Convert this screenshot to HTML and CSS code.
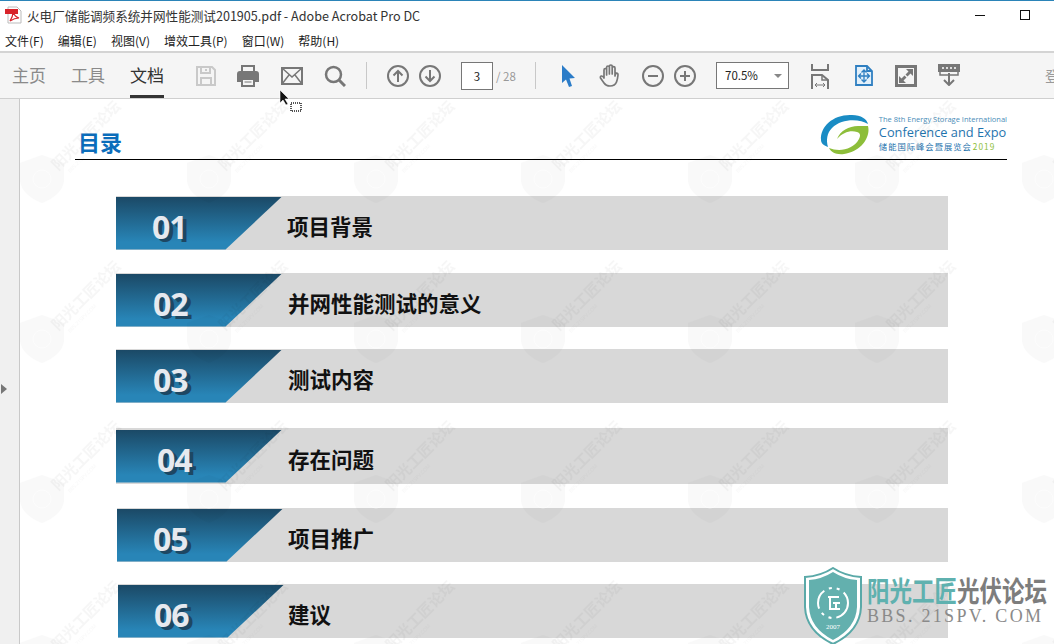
FILE: index.html
```html
<!DOCTYPE html>
<html lang="zh-CN">
<head>
  <meta charset="UTF-8" />
  <title>火电厂储能调频系统并网性能测试201905.pdf - Adobe Acrobat Pro DC</title>
  <link rel="stylesheet" href="styles.css">
</head>
<body>
  <div class="window">

    <div class="titlebar">
      <svg class="pdf-icon" width="18" height="18" viewBox="0 0 18 18">
        <path d="M3 1h9l4 4v12H3z" fill="#fff" stroke="#bbb"/>
        <path d="M0 3h13v5H0z" fill="#d8232a"/>
        <path d="M5 15c2-3 3-6 3-9 1 3 3 5 6 6-3 0-6 1-9 3z" fill="none" stroke="#d8232a" stroke-width="1.2"/>
      </svg>
      <span class="title-text">火电厂储能调频系统并网性能测试201905.pdf - Adobe Acrobat Pro DC</span>
      <span class="win-min"></span>
      <span class="win-max"></span>
    </div>

    <div class="menubar">
      <span>文件(F)</span>
      <span>编辑(E)</span>
      <span>视图(V)</span>
      <span>增效工具(P)</span>
      <span>窗口(W)</span>
      <span>帮助(H)</span>
    </div>

    <div class="toolbar">
      <span class="tab">主页</span>
      <span class="tab">工具</span>
      <span class="tab active">文档</span>

      <svg class="tool save" width="22" height="22" viewBox="0 0 22 22" fill="none" stroke="#c9c9c9" stroke-width="2">
        <path d="M2 2h15l3 3v15H2z"/><path d="M6 2v6h9V2M6 20v-7h10v7"/><path d="M11 4v2"/>
      </svg>
      <svg class="tool print" width="22" height="22" viewBox="0 0 22 22">
        <path d="M5 1h12v6H5z" fill="none" stroke="#777" stroke-width="2"/>
        <path d="M3 6h16q3 0 3 3v8h-4v-4H4v4H0V9q0-3 3-3z" fill="#777"/>
        <path d="M5 14h12v7H5z" fill="none" stroke="#777" stroke-width="2"/>
        <path d="M7.500 17h7" stroke="#777"/>
      </svg>
      <svg class="tool mail" width="22" height="18" viewBox="0 0 22 18" fill="none" stroke="#777" stroke-width="2">
        <path d="M1 1h20v16H1z"/><path d="M1 1l10 9 10-9M1 17l7-9M21 17l-7-9" stroke-width="1.500"/>
      </svg>
      <svg class="tool search" width="22" height="22" viewBox="0 0 22 22" fill="none" stroke="#777" stroke-width="2.500">
        <circle cx="9.500" cy="9.500" r="7.500"/><path d="M15 15l6 6" stroke-width="3"/>
      </svg>

      <span class="divider div-a"></span>

      <svg class="tool up" width="22" height="22" viewBox="0 0 22 22" fill="none" stroke="#777" stroke-width="2">
        <circle cx="11" cy="11" r="10"/><path d="M11 17V6M6.500 10.500L11 6l4.500 4.500"/>
      </svg>
      <svg class="tool down" width="22" height="22" viewBox="0 0 22 22" fill="none" stroke="#777" stroke-width="2">
        <circle cx="11" cy="11" r="10"/><path d="M11 5v11M6.500 11.500L11 16l4.500-4.500"/>
      </svg>

      <span class="page-box">3</span>
      <span class="page-total">/ 28</span>

      <span class="divider div-b"></span>

      <svg class="tool arrow" width="15" height="22" viewBox="0 0 15 22">
        <path d="M1 0l13 13-5.500.5L11 21l-3 1-3-7.500L1 18z" fill="#2b7cc8"/>
      </svg>
      <svg class="tool hand" width="22" height="24" viewBox="0 0 22 24" fill="none" stroke="#777" stroke-width="1.700" stroke-linecap="round" stroke-linejoin="round">
        <path d="M5 14V6q0-1.500 1.300-1.500T7.600 6v5M7.600 10V3.500q0-1.500 1.400-1.500t1.400 1.500V10M10.400 10V2.500Q10.400 1 11.800 1t1.400 1.500V10M13.200 10V4q0-1.400 1.400-1.400T16 4v8q0-2 1.600-3 1.400 0 1.400 2-.5 5-1.500 7-1.500 4-6.500 4-4 0-6-3l-3.500-5q-.5-1.800 1-2 1.500-.2 2.500 2"/>
      </svg>
      <svg class="tool minus" width="22" height="22" viewBox="0 0 22 22" fill="none" stroke="#777" stroke-width="2">
        <circle cx="11" cy="11" r="10"/><path d="M6 11h10"/>
      </svg>
      <svg class="tool plus" width="22" height="22" viewBox="0 0 22 22" fill="none" stroke="#777" stroke-width="2">
        <circle cx="11" cy="11" r="10"/><path d="M6 11h10M11 6v10"/>
      </svg>

      <span class="zoom-box">70.5%<i class="caret"></i></span>

      <svg class="tool fit" width="18" height="25" viewBox="0 0 18 25" fill="none" stroke="#777" stroke-width="2">
        <path d="M1 0v6h16V0"/><path d="M1 25V11h10l6 5v9"/><path d="M11 11v5h6" stroke-width="1.500"/><path d="M4 21h10M4 21l2-2M4 21l2 2M14 21l-2-2M14 21l-2 2" stroke-width="1"/>
      </svg>
      <svg class="tool scroll" width="18" height="21" viewBox="0 0 18 21" stroke="#2f7fc1" stroke-width="1.800">
        <path d="M1 1h11l5 5v14H1z" fill="#e3f0fa"/><path d="M12 1v5h5" fill="none"/><path d="M9 5v12M4 11h10M6.500 7.500L9 5l2.500 2.500M6.500 14.500L9 17l2.500-2.500M6 8.500L3.500 11 6 13.500M12 8.500l2.500 2.500-2.500 2.500" fill="none" stroke-width="1.300"/>
      </svg>
      <svg class="tool full" width="22" height="22" viewBox="0 0 22 22">
        <path d="M1.500 1.500h19v19h-19z" fill="none" stroke="#777" stroke-width="3"/>
        <path d="M11 4h7v7l-2.500-2.500-3 3-2-2 3-3zM11 18H4v-7l2.500 2.500 3-3 2 2-3 3z" fill="#777"/>
      </svg>
      <svg class="tool stamp" width="22" height="22" viewBox="0 0 22 22" fill="none">
        <path d="M0 0h22v8H0z" fill="#777"/>
        <path d="M4 4h2M8 4h2M12 4h2M16 4h2" stroke="#fff" stroke-width="1.500"/>
        <path d="M2 8v3h18V8" stroke="#777" stroke-width="1.500"/>
        <path d="M11 9v12M6 16l5 5 5-5" stroke="#777" stroke-width="2"/>
      </svg>

      <span class="signin">登录</span>
    </div>

    <div class="viewer">
      <div class="rail"><i class="rail-arrow"></i></div>

      <div class="page">
        <div class="page-head">
          <h1>目录</h1>
          <div class="conf-logo">
            <svg width="50" height="42" viewBox="0 0 50 42">
              <path d="M1 26C0 12 14 0 32 1c9 0 15 4 16 9C40 5 22 4 12 14 7 19 6 26 8 33 3 31 1 29 1 26z" fill="#1a8cc4"/>
              <path d="M48 12c3 12-8 26-24 28-8 1-13-2-15-6 10 4 24 2 30-9 2-4 1-6-2-7-6-2-14 0-20 7 3-8 12-13 21-13 5 0 9 0 10 0z" fill="#8dbe3a"/>
            </svg>
            <div class="conf-text">
              <div class="conf-small">The 8th Energy Storage International</div>
              <div class="conf-big">Conference and Expo</div>
              <div class="conf-cn">储能国际峰会暨展览会<b>2019</b></div>
            </div>
          </div>
        </div>

        <div class="row row-1"><div class="ribbon"><span class="num">01</span></div><span class="label">项目背景</span></div>
        <div class="row row-2"><div class="ribbon"><span class="num">02</span></div><span class="label">并网性能测试的意义</span></div>
        <div class="row row-3"><div class="ribbon"><span class="num">03</span></div><span class="label">测试内容</span></div>
        <div class="row row-4"><div class="ribbon"><span class="num">04</span></div><span class="label">存在问题</span></div>
        <div class="row row-5"><div class="ribbon"><span class="num">05</span></div><span class="label">项目推广</span></div>
        <div class="row row-6"><div class="ribbon"><span class="num">06</span></div><span class="label">建议</span></div>

        <svg class="watermarks" width="1034" height="545">
          <defs>
            <pattern id="wm" width="167" height="160" patternUnits="userSpaceOnUse">
              <path d="M22 56l22 8v18q-2 14-22 22Q2 96 0 82V64z" fill="#000" fill-opacity=".025"/>
              <circle cx="22" cy="80" r="9" fill="none" stroke="#fff" stroke-opacity=".5"/>
              <text transform="translate(38 72) rotate(-45)" class="wm-text">阳光工匠论坛</text>
              <text transform="translate(50 74) rotate(-45)" class="wm-small">BBS.21SPV.COM</text>
            </pattern>
          </defs>
          <rect width="1034" height="545" fill="url(#wm)"/>
        </svg>

        <div class="site-mark">
          <svg class="site-shield" width="58" height="78" viewBox="0 0 58 78">
            <path d="M29 1q12 8 28 9v30q-1 24-28 37Q2 64 1 40V10q16-1 28-9z" fill="#fff" stroke="#5aa9a8" stroke-width="2"/>
            <path d="M29 5q11 7 24 8v27q-1 21-24 33Q6 61 5 40V13q13-1 24-8z" fill="#63b0ae"/>
            <circle cx="29" cy="36" r="15" fill="none" stroke="#fff" stroke-width="2" stroke-dasharray="20 5 3 5 3 5"/>
            <path d="M24 30h11M26 30v12h10M29 36h7M32 36v6" fill="none" stroke="#fff" stroke-width="2"/>
            <text x="29" y="62" class="shield-year">2007</text>
          </svg>
          <div class="site-text">
            <div class="site-name"><span class="teal">阳光工匠</span><span class="grey">光伏论坛</span></div>
            <div class="site-url">BBS. 21SPV. COM</div>
          </div>
        </div>
      </div>
    </div>

    <svg class="cursor" width="24" height="24" viewBox="0 0 24 24">
      <path d="M1 0v13l3-3 3 5 2-1-3-5h4z" fill="#111" stroke="#fff" stroke-width=".6"/>
      <rect x="12" y="13" width="10" height="8" fill="#fff" stroke="#555" stroke-width="2" stroke-dasharray="1 1"/>
    </svg>
  </div>
</body>
</html>
```

FILE: styles.css
```css
* {
  box-sizing: border-box;
}

html, body {
  margin: 0;
  height: 100%;
  overflow: hidden;
}

body {
  font-family: "Noto Sans CJK SC", "Noto Sans", sans-serif;
  color: #222;
  background: #fff;
}

.window {
  position: relative;
  height: 644px;
  display: flex;
  flex-direction: column;
  border-top: 1px solid #2b84b8;
}

/* title + menu */
.titlebar {
  height: 28px;
  display: flex;
  align-items: center;
  padding-left: 5px;
  background: #fff;
}

.pdf-icon {
  flex: none;
}

.title-text {
  margin-left: 4px;
  font-size: 12.6px;
  color: #333;
  white-space: nowrap;
}

.win-min {
  margin-left: auto;
  width: 10px;
  height: 1px;
  background: #111;
  margin-right: 35px;
}

.win-max {
  width: 10px;
  height: 10px;
  border: 1px solid #111;
  margin-right: 24px;
}

.menubar {
  height: 22px;
  display: flex;
  align-items: center;
  padding-left: 5px;
  gap: 14px;
  font-size: 12px;
  color: #222;
  background: #fff;
}

/* toolbar */
.toolbar {
  height: 48px;
  flex: none;
  display: flex;
  align-items: center;
  padding-left: 12px;
  background: #f5f5f5;
  border-top: 2px solid #d4d4d4;
  border-bottom: 1px solid #cfcfcf;
  overflow: hidden;
}

.tab {
  flex: none;
  align-self: stretch;
  display: flex;
  align-items: center;
  margin-right: 25px;
  font-size: 17px;
  color: #8a8a8a;
  white-space: nowrap;
  border-bottom: 3px solid transparent;
}

.tab.active {
  color: #333;
  border-bottom-color: #333;
}

.tool {
  flex: none;
}

.save { margin-left: 6px; }
.print { margin-left: 20px; }
.mail { margin-left: 22px; }
.search { margin-left: 21px; }
.up { margin-left: 20px; }
.down { margin-left: 10px; }
.arrow { margin-left: 25px; }
.hand { margin-left: 23px; }
.minus { margin-left: 21px; }
.plus { margin-left: 10px; }
.fit { margin-left: 22px; margin-top: 2px; }
.scroll { margin-left: 26px; }
.full { margin-left: 22px; }
.stamp { margin-left: 21px; margin-top: -2px; }

.divider {
  flex: none;
  width: 1px;
  height: 27px;
  background: #c8c8c8;
}

.div-a { margin-left: 20px; }
.div-b { margin-left: 15px; }

.page-box {
  flex: none;
  width: 32px;
  height: 28px;
  margin-left: 20px;
  border: 1px solid #777;
  background: #fff;
  font-size: 11.5px;
  text-align: center;
  line-height: 26px;
  color: #222;
}

.page-total {
  flex: none;
  width: 24px;
  margin-left: 3px;
  font-size: 11.5px;
  color: #999;
  white-space: nowrap;
}

.zoom-box {
  flex: none;
  position: relative;
  width: 73px;
  height: 27px;
  margin-left: 20px;
  padding-left: 8px;
  border: 1px solid #777;
  background: #fff;
  font-size: 11.5px;
  line-height: 25px;
  color: #222;
}

.caret {
  position: absolute;
  right: 3px;
  top: 11px;
  width: 0;
  height: 0;
  margin-right: 3px;
  border-left: 4px solid transparent;
  border-right: 4px solid transparent;
  border-top: 4px solid #888;
}

.signin {
  flex: none;
  margin-left: 85px;
  font-size: 15px;
  color: #999;
  white-space: nowrap;
}

/* document area */
.viewer {
  flex: 1;
  display: flex;
  min-height: 0;
}

.rail {
  position: relative;
  width: 20px;
  flex: none;
  display: flex;
  align-items: center;
  background: #f0f0f0;
  border-right: 1px solid #c9c9c9;
}

.rail-arrow {
  width: 0;
  height: 0;
  margin: 35px 0 0 1px;
  border-top: 5px solid transparent;
  border-bottom: 5px solid transparent;
  border-left: 6px solid #777;
}

.page {
  position: relative;
  flex: 1;
  overflow: hidden;
  background: #fff;
}

.page-head {
  width: 932px;
  height: 61px;
  margin-left: 55px;
  display: flex;
  align-items: flex-end;
  justify-content: space-between;
  border-bottom: 1px solid #000;
}

.page-head h1 {
  margin: 0 0 0 3px;
  padding-bottom: 3px;
  font-size: 22px;
  line-height: 30px;
  font-weight: 700;
  color: #0b6dbb;
}

.conf-logo {
  display: flex;
  align-items: flex-end;
  gap: 9px;
}

.conf-logo svg {
  margin-bottom: 3px;
}

.conf-text {
  margin-bottom: 7px;
  color: #1f74ae;
  white-space: nowrap;
}

.conf-small {
  font: 7.500px/11px "Open Sans", sans-serif;
  color: #4a8db8;
}

.conf-big {
  font: 12.800px/15px "Open Sans", sans-serif;
}

.conf-cn {
  font-size: 8.300px;
  line-height: 12px;
  letter-spacing: 1px;
}

.conf-cn b {
  margin-left: 1px;
  font-weight: 400;
  color: #8dbe3a;
}

.row {
  height: 54px;
  width: 832px;
  margin-left: 96px;
  display: flex;
  align-items: center;
  background: #d8d8d8;
}

.row-1 { margin-top: 36px; }
.row-2 { margin-top: 23px; }
.row-3 { margin-top: 22px; }
.row-4 { margin-top: 25px; height: 56px; }
.row-5 { margin-top: 24px; margin-left: 97px; width: 831px; }
.row-6 { margin-top: 22px; margin-left: 98px; width: 830px; }

.ribbon {
  width: 166px;
  height: 53px;
  flex: none;
  display: flex;
  align-items: center;
  padding: 8px 0 0 36px;
  background: linear-gradient(#1b4966, #2885b7 85%);
  clip-path: polygon(0 0, 100% 0, 66% 100%, 0 100%);
}

.row-2 .ribbon { padding-left: 37px; }
.row-3 .ribbon { padding-left: 37px; }
.row-4 .ribbon { padding-left: 41px; }

.num {
  font: 700 32px/1 "Open Sans", sans-serif;
  letter-spacing: -1px;
  color: #e6e9ef;
  text-shadow: 4px 3px 0 #1d4763;
}

.label {
  margin-left: 5px;
  padding-top: 5px;
  font-size: 21.500px;
  font-weight: 700;
  color: #111;
  white-space: nowrap;
}

.row-2 .label,
.row-3 .label,
.row-4 .label { margin-left: 6px; }
.row-6 .label { margin-left: 4px; }

/* overlays */
.watermarks {
  position: absolute;
  left: 0;
  top: 0;
  pointer-events: none;
}

.wm-text {
  font: 700 15px "Noto Sans CJK SC", sans-serif;
  fill: #000;
  fill-opacity: .035;
}

.wm-small {
  font: 5px "Open Sans", sans-serif;
  fill: #000;
  fill-opacity: .03;
}

.site-mark {
  position: absolute;
  left: 784px;
  top: 468px;
  display: flex;
  gap: 5px;
}

.site-shield {
  flex: none;
}

.shield-year {
  font: 7px "Liberation Serif", serif;
  fill: #fff;
  text-anchor: middle;
}

.site-text {
  margin-top: 5px;
}

.site-name {
  font-size: 22.500px;
  line-height: 34px;
  font-weight: 700;
  white-space: nowrap;
  transform: scaleY(1.25);
}

.teal {
  color: #5fb1af;
}

.grey {
  color: #7d7d7d;
}

.site-url {
  margin-top: 1px;
  font: 18px/18px "Liberation Serif", serif;
  letter-spacing: 2.300px;
  color: #8a8a8a;
  white-space: nowrap;
}

.cursor {
  position: absolute;
  left: 279px;
  top: 89px;
}
```
